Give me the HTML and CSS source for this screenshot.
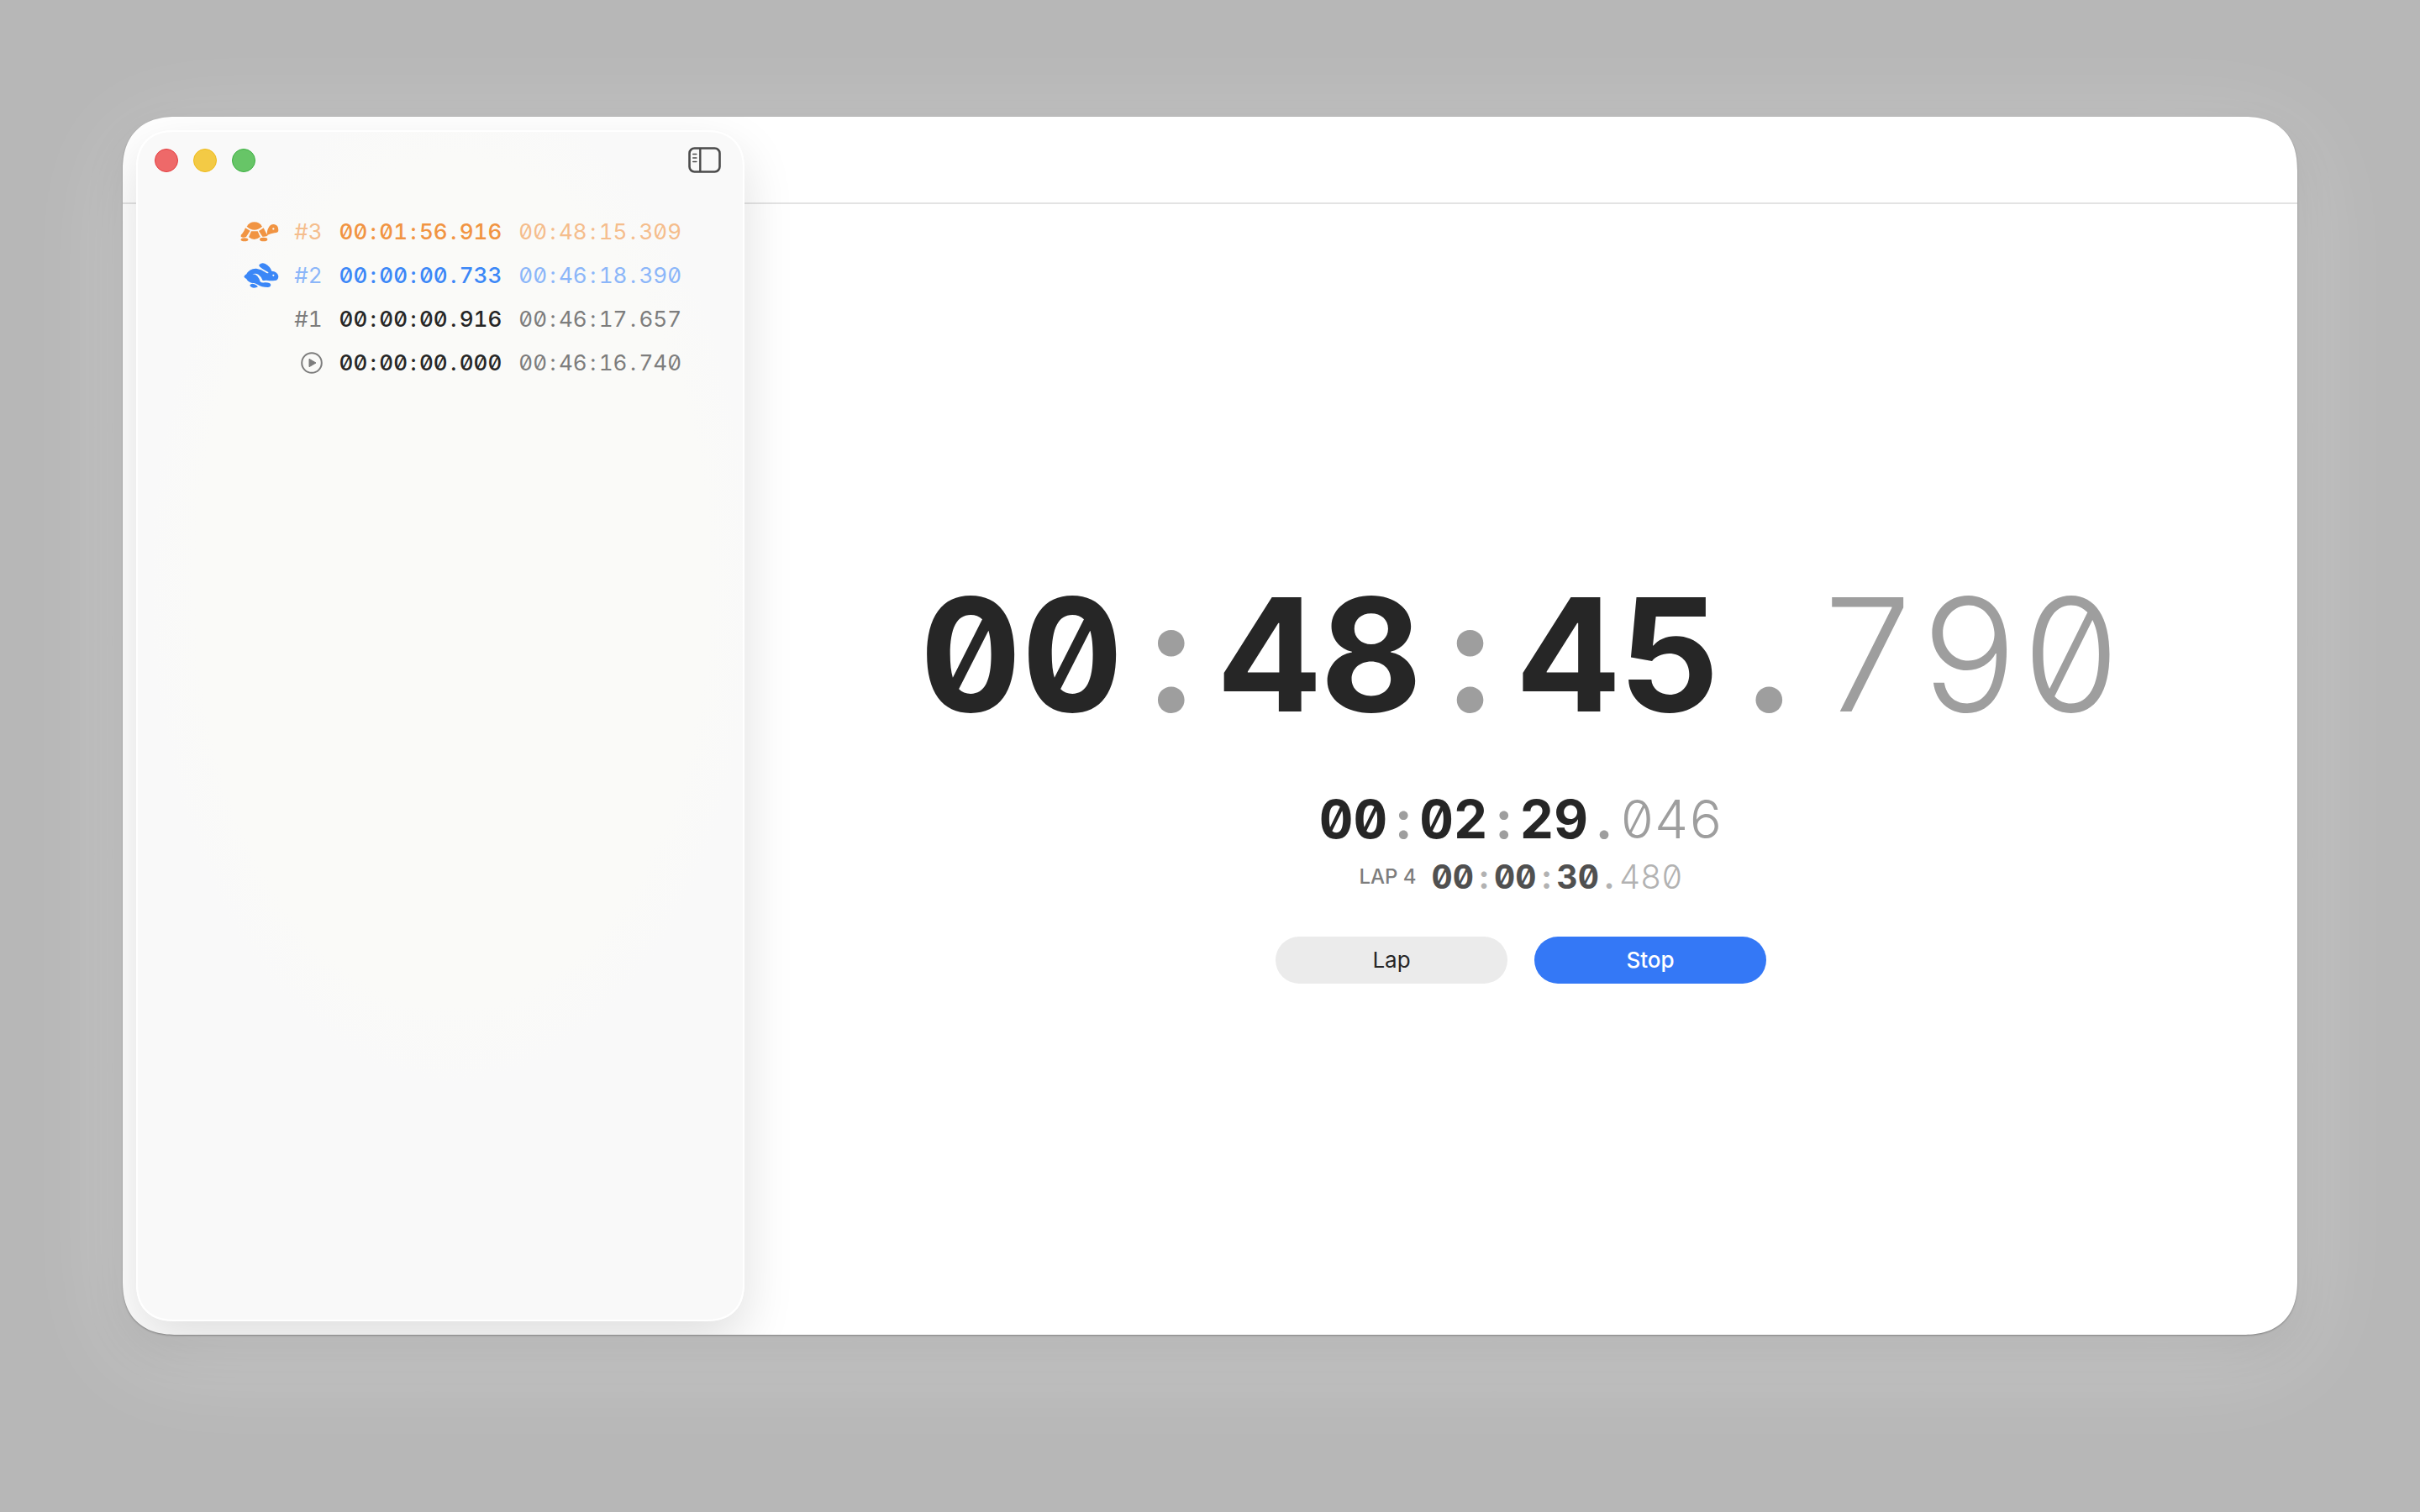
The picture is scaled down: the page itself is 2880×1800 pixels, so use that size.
FILE: index.html
```html
<!DOCTYPE html>
<html lang="en">
<head>
<meta charset="utf-8">
<title>Stopwatch</title>
<link rel="stylesheet" href="styles.css">
</head>
<body>
<div class="window">
  <aside class="sidebar">
    <header class="sidebar-bar">
      <div class="lights">
        <button class="light light-close" aria-label="Close"></button>
        <button class="light light-minimize" aria-label="Minimize"></button>
        <button class="light light-zoom" aria-label="Zoom"></button>
      </div>
      <button class="toggle" aria-label="Toggle sidebar">
        <svg width="40" height="32" viewBox="0 0 40 32" fill="none" stroke="#4b4b4b">
          <rect x="1.5" y="1.5" width="36" height="28" rx="6" stroke-width="2.6"/>
          <path d="M14.3 2v27" stroke-width="2.4"/>
          <path d="M5.8 8.5h4M5.8 13h4M5.8 17.5h4" stroke-width="1.6" stroke-linecap="round"/>
        </svg>
      </button>
    </header>
    <table class="laps">
      <tbody>
        <tr class="slowest">
          <td class="mark">
            <svg width="46" height="24" viewBox="470 431 138 72" fill="currentColor" role="img" aria-label="Slowest">
              <path d="M493 448Q503 432 520 432Q538 432 548 448Q520 472 493 448Z"/>
              <path d="M488 453L505 463L491 485Q480 490 472 484Q470 478 477 473Q484 465 488 453Z"/>
              <path d="M509 465H532L541 485Q520 502 500 486Z"/>
              <path d="M536 464L553 453Q559 467 568 480Q565 485 549 484Z"/>
              <ellipse cx="485" cy="495" rx="13" ry="6"/>
              <ellipse cx="553" cy="494" rx="14" ry="7"/>
              <path fill-rule="evenodd" d="M566 479Q564 463 571 452Q577 439 590 440Q606 442 606 461Q606 471 592 471Q579 473 566 479ZM588 452.500a3.500 3.500 0 1 0 .1 0Z"/>
            </svg>
          </td>
          <th class="lap-no" scope="row">#3</th>
          <td class="lap-time">00<i>:</i>01<i>:</i>56<i>.</i>916</td>
          <td class="lap-total">00<i>:</i>48<i>:</i>15<i>.</i>309</td>
        </tr>
        <tr class="fastest">
          <td class="mark">
            <svg width="42" height="30" viewBox="485 579 126 90" fill="currentColor" role="img" aria-label="Fastest">
              <path fill-rule="evenodd" d="M541 585Q549 577 562 582Q580 592 585 608Q605 609 609 626Q609 641 596 642Q583 644 572 642Q564 640 559 642L553 642Q548 628 538 621Q527 614 516 619Q528 619 534 626Q541 634 544 646Q549 651 560 649Q580 648 582 657Q581 666 571 666Q548 666 536 657Q526 650 512 650Q499 646 495 636Q489 634 486 628Q489 622 495 619Q506 598 530 599Q549 602 562 612Q570 618 574 614Q572 611 563 607Q550 599 543 593Q538 589 541 585ZM591 620.500a3 3 0 1 0 .1 0Z"/>
              <path d="M507 658Q513 650 523 655Q531 658 536 664Q531 668 521 668Q508 667 507 658Z"/>
            </svg>
          </td>
          <th class="lap-no" scope="row">#2</th>
          <td class="lap-time">00<i>:</i>00<i>:</i>00<i>.</i>733</td>
          <td class="lap-total">00<i>:</i>46<i>:</i>18<i>.</i>390</td>
        </tr>
        <tr>
          <td class="mark"></td>
          <th class="lap-no" scope="row">#1</th>
          <td class="lap-time">00<i>:</i>00<i>:</i>00<i>.</i>916</td>
          <td class="lap-total">00<i>:</i>46<i>:</i>17<i>.</i>657</td>
        </tr>
        <tr>
          <td class="mark"></td>
          <th class="lap-no" scope="row">
            <svg width="26" height="26" viewBox="0 0 26 26" role="img" aria-label="Start">
              <circle cx="13" cy="13" r="11.800" fill="none" stroke="currentColor" stroke-width="2"/>
              <path d="M10 8.300v9.400l8-4.700z" fill="currentColor" stroke="currentColor" stroke-linejoin="round"/>
            </svg>
          </th>
          <td class="lap-time">00<i>:</i>00<i>:</i>00<i>.</i>000</td>
          <td class="lap-total">00<i>:</i>46<i>:</i>16<i>.</i>740</td>
        </tr>
      </tbody>
    </table>
  </aside>
  <div class="toolbar"></div>
  <main class="stage">
    <div class="time time-main">00<i>:</i>48<i>:</i>45<i>.</i><span class="ms">790</span></div>
    <div class="time time-total">00<i>:</i>02<i>:</i>29<i>.</i><span class="ms">046</span></div>
    <div class="lap-row">
      <span class="lap-label">LAP 4</span>
      <div class="time time-lap">00<i>:</i>00<i>:</i>30<i>.</i><span class="ms">480</span></div>
    </div>
    <div class="actions">
      <button class="action">Lap</button>
      <button class="action action-primary">Stop</button>
    </div>
  </main>
</div>
</body>
</html>
```
FILE: styles.css
```css
* { box-sizing: border-box; }

body {
  margin: 0;
  min-height: 100vh;
  padding: 139px 146px 211px;
  display: grid;
  background: #b7b7b7;
  font-family: Inter, "Liberation Sans", sans-serif;
  color: #262626;
}

button {
  margin: 0;
  padding: 0;
  border: 0;
  background: none;
  font: inherit;
  color: inherit;
}

.window {
  display: grid;
  grid-template: 104px 1fr / 740px 1fr;
  overflow: hidden;
  border-radius: 64px;
  corner-shape: superellipse(1.25);
  background: #fff;
  box-shadow:
    0 1px 2px rgba(0, 0, 0, .3),
    0 20px 50px rgba(0, 0, 0, .08),
    0 24px 120px rgba(255, 255, 255, .3);
}

.toolbar {
  grid-area: 1 / 1 / 2 / 3;
  border-bottom: 2px solid #e3e3e3;
}

.sidebar {
  grid-area: 1 / 1 / 3 / 2;
  z-index: 1;
  margin: 16px 0 16px 16px;
  border: 2px solid #fff;
  border-radius: 46px;
  corner-shape: superellipse(1.25);
  background: radial-gradient(ellipse 50% 42% at 52% 38%, #fafaf8 85%, #f9f9f9);
  box-shadow: 0 24px 60px rgba(0, 0, 0, .13);
}

.sidebar-bar {
  display: flex;
  justify-content: space-between;
  align-items: center;
  height: 68px;
  padding: 0 25px 0 20px;
}

.lights { display: flex; gap: 18px; }

.light {
  width: 28px;
  height: 28px;
  border: 1px solid;
  border-radius: 50%;
}

.light-close { background: #ee6969; border-color: #e33e41; }
.light-minimize { background: #f3ca45; border-color: #eebb1c; }
.light-zoom { background: #67c567; border-color: #3db143; }

.toggle svg, .laps svg { display: block; }

/* Digits and separators share one cell width */
.laps, .time { font-feature-settings: "tnum", "zero"; }

i {
  display: inline-block;
  font-style: normal;
  text-align: center;
}

.laps {
  margin: 25px 73px 0 auto;
  border-collapse: collapse;
  font-size: 26px;
  line-height: 32px;
  color: #262626;
}

.laps i { width: 14px; }
.laps tr { height: 52px; }
.laps td, .laps th { padding: 0 0 0 20px; font-weight: 400; vertical-align: middle; }
.laps .mark { padding: 0; }
.mark svg, .lap-no svg { margin-left: auto; }
.laps .lap-no { padding-left: 18px; text-align: right; color: #7d7d7d; }
.laps .lap-time { font-weight: 500; }
.laps .lap-total { color: #7d7d7d; }

.laps .slowest .mark, .laps .slowest .lap-time { color: #f19442; }
.laps .slowest .lap-no, .laps .slowest .lap-total { color: #f5bd8c; }
.laps .fastest .mark, .laps .fastest .lap-time { color: #3b87f7; }
.laps .fastest .lap-no, .laps .fastest .lap-total { color: #8bb6f9; }

.stage {
  grid-area: 2 / 2 / 3 / 3;
  display: flex;
  flex-direction: column;
  justify-content: center;
  align-items: center;
}

.time {
  font-weight: 700;
  white-space: nowrap;
}

.time i { color: #9e9e9e; }
.ms { color: #9e9e9e; font-weight: 300; }

.time-main { font-size: 187px; line-height: 236px; }
.time-main i { width: 114px; }
.time-total { margin-top: 40px; font-size: 63px; line-height: 76px; }
.time-total i { width: 38px; }
.time-total .ms { font-weight: 350; }

.lap-row { display: flex; align-items: center; gap: 18px; }
.lap-label { font-size: 24px; line-height: 28px; font-weight: 500; color: #7d7d7d; }
.time-lap { font-size: 39px; line-height: 62px; color: #505050; }
.time-lap i { width: 24px; }
.time-lap i, .time-lap .ms { color: #b2b2b2; }

.actions { display: flex; gap: 32px; margin-top: 40px; }

.action {
  width: 276px;
  height: 56px;
  border-radius: 28px;
  background: #ebebeb;
  font-size: 26px;
  line-height: 32px;
}

.action-primary { background: #3478f6; color: #fff; font-weight: 500; }
```
